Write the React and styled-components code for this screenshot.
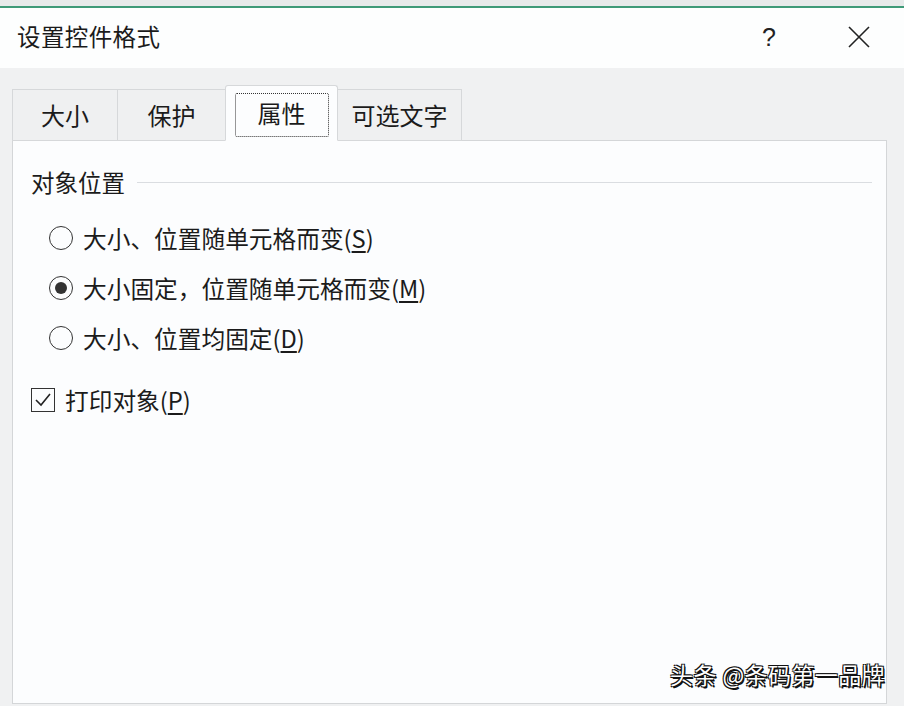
import React, { useState } from "react";
import styled, { createGlobalStyle } from "styled-components";

const FONT = `"Noto Sans CJK SC", "Noto Sans", "Liberation Sans", sans-serif`;

const GlobalStyle = createGlobalStyle`
  html, body {
    margin: 0;
    padding: 0;
    width: 904px;
    height: 706px;
    overflow: hidden;
    background: #f0f0f0;
  }
  * { box-sizing: border-box; }
`;

const Window = styled.div`
  position: relative;
  width: 904px;
  height: 706px;
  display: flex;
  flex-direction: column;
  font-family: ${FONT};
  color: #1b1b1b;
`;

const TopStrip = styled.div`
  height: 8px;
  background: #e7eaea;
  border-bottom: 2px solid #3f9a78;
  flex: none;
`;

const TitleBar = styled.div`
  height: 60px;
  flex: none;
  display: flex;
  align-items: center;
  background: #fdfefe;
  padding-left: 17px;
  padding-bottom: 2px;
`;

const Title = styled.div`
  flex: 1;
  font-size: 23.5px;
  letter-spacing: 0.4px;
  line-height: 1;
`;

const TitleButton = styled.div`
  width: 90px;
  height: 58px;
  display: flex;
  align-items: center;
  justify-content: center;
  font-size: 25px;
  font-family: "Liberation Sans", sans-serif;
  color: #222;
`;

const Body = styled.div`
  flex: 1;
  display: flex;
  flex-direction: column;
  background: #f0f1f2;
  padding: 18px 17px 2px 12px;
`;

const TabRow = styled.div`
  display: flex;
  align-items: flex-end;
  height: 55px;
  flex: none;
  position: relative;
  z-index: 1;
  margin-bottom: -1px;
`;

const Tab = styled.div`
  width: ${(p) => p.$w}px;
  height: ${(p) => (p.$active ? 56 : 52)}px;
  display: flex;
  align-items: center;
  justify-content: center;
  padding-top: ${(p) => (p.$active ? 3 : 0)}px;
  font-size: 24px;
  white-space: nowrap;
  background: ${(p) => (p.$active ? "#fcfdfe" : "#eff0f1")};
  border: 1px solid #d6d8da;
  border-bottom: ${(p) => (p.$active ? "1px solid #fcfdfe" : "1px solid #d6d8da")};
  border-left: ${(p) => (p.$first || p.$active ? "1px solid #d6d8da" : "none")};
  border-right: ${(p) => (p.$beforeActive ? "none" : "1px solid #d6d8da")};
  border-radius: ${(p) => (p.$active ? "3px 3px 0 0" : "0")};
  cursor: default;
`;

const FocusLabel = styled.span`
  display: flex;
  align-items: center;
  justify-content: center;
  height: ${(p) => (p.$focus ? "44px" : "auto")};
  padding: ${(p) => (p.$focus ? "0 22px 2px" : "0")};
  border: ${(p) => (p.$focus ? "1px dotted #333" : "none")};
  border-radius: 2px;
  line-height: 1.35;
`;

const Panel = styled.div`
  flex: 1;
  background: #fcfdfe;
  border: 1px solid #d4d6d8;
  padding: 26px 14px 0 18px;
`;

const GroupHeader = styled.div`
  display: flex;
  align-items: center;
  gap: 12px;
  height: 30px;
  font-size: 23.5px;
`;

const GroupLine = styled.div`
  flex: 1;
  height: 1px;
  background: #dadde1;
`;

const OptionList = styled.div`
  display: flex;
  flex-direction: column;
  margin-top: 16px;
  padding-left: 18px;
`;

const OptionRow = styled.label`
  display: flex;
  align-items: center;
  height: 50px;
  gap: 10px;
  font-size: 23.7px;
  cursor: default;
`;

const RadioCircle = styled.span`
  width: 24px;
  height: 24px;
  border-radius: 50%;
  border: 1.5px solid #333;
  display: flex;
  align-items: center;
  justify-content: center;
  flex: none;

  &::after {
    content: "";
    width: 12px;
    height: 12px;
    border-radius: 50%;
    background: #333;
    display: ${(p) => (p.$on ? "block" : "none")};
  }
`;

const Key = styled.span`
  text-decoration: underline;
  text-underline-offset: 3px;
`;

const CheckRow = styled.label`
  display: flex;
  align-items: center;
  height: 50px;
  gap: 10px;
  margin-top: 12px;
  font-size: 23.7px;
  cursor: default;
`;

const CheckBox = styled.span`
  width: 24px;
  height: 24px;
  border: 1.5px solid #333;
  display: flex;
  align-items: center;
  justify-content: center;
  flex: none;
`;

const Watermark = styled.div`
  position: absolute;
  right: 19px;
  bottom: 15px;
  font-size: 23px;
  color: #ffffff;
  letter-spacing: 0.4px;
  text-shadow: -1px -1px 0 #111, 1px 1px 0 #111, -1px 1px 0 #111, 1px -1px 0 #111, 1.5px 1.5px 0 #111;
`;

const tabs = [
  { label: "大小", w: 106 },
  { label: "保护", w: 107 },
  { label: "属性", w: 113 },
  { label: "可选文字", w: 124 },
];

const options = [
  { text: "大小、位置随单元格而变", key: "S" },
  { text: "大小固定，位置随单元格而变", key: "M" },
  { text: "大小、位置均固定", key: "D" },
];

export default function App() {
  const [active, setActive] = useState(2);
  const [choice, setChoice] = useState(1);
  const [print, setPrint] = useState(true);

  return (
    <>
      <GlobalStyle />
      <Window>
        <TopStrip />
        <TitleBar>
          <Title>设置控件格式</Title>
          <TitleButton>?</TitleButton>
          <TitleButton>
            <svg width="24" height="24" viewBox="0 0 24 24">
              <path d="M2 2 L22 22 M22 2 L2 22" stroke="#222" strokeWidth="1.6" fill="none" />
            </svg>
          </TitleButton>
        </TitleBar>
        <Body>
          <TabRow>
            {tabs.map((t, i) => (
              <Tab
                key={t.label}
                $w={t.w}
                $first={i === 0}
                $active={i === active}
                $beforeActive={i === active - 1}
                onClick={() => setActive(i)}
              >
                <FocusLabel $focus={i === active}>{t.label}</FocusLabel>
              </Tab>
            ))}
          </TabRow>
          <Panel>
            <GroupHeader>
              对象位置
              <GroupLine />
            </GroupHeader>
            <OptionList>
              {options.map((o, i) => (
                <OptionRow key={o.key} onClick={() => setChoice(i)}>
                  <RadioCircle $on={choice === i} />
                  <span>
                    {o.text}(<Key>{o.key}</Key>)
                  </span>
                </OptionRow>
              ))}
            </OptionList>
            <CheckRow onClick={() => setPrint(!print)}>
              <CheckBox>
                {print && (
                  <svg width="20" height="20" viewBox="0 0 20 20">
                    <path d="M3 10 L8 15 L17 4" stroke="#222" strokeWidth="1.6" fill="none" />
                  </svg>
                )}
              </CheckBox>
              <span>
                打印对象(<Key>P</Key>)
              </span>
            </CheckRow>
          </Panel>
        </Body>
        <Watermark>头条 @条码第一品牌</Watermark>
      </Window>
    </>
  );
}
